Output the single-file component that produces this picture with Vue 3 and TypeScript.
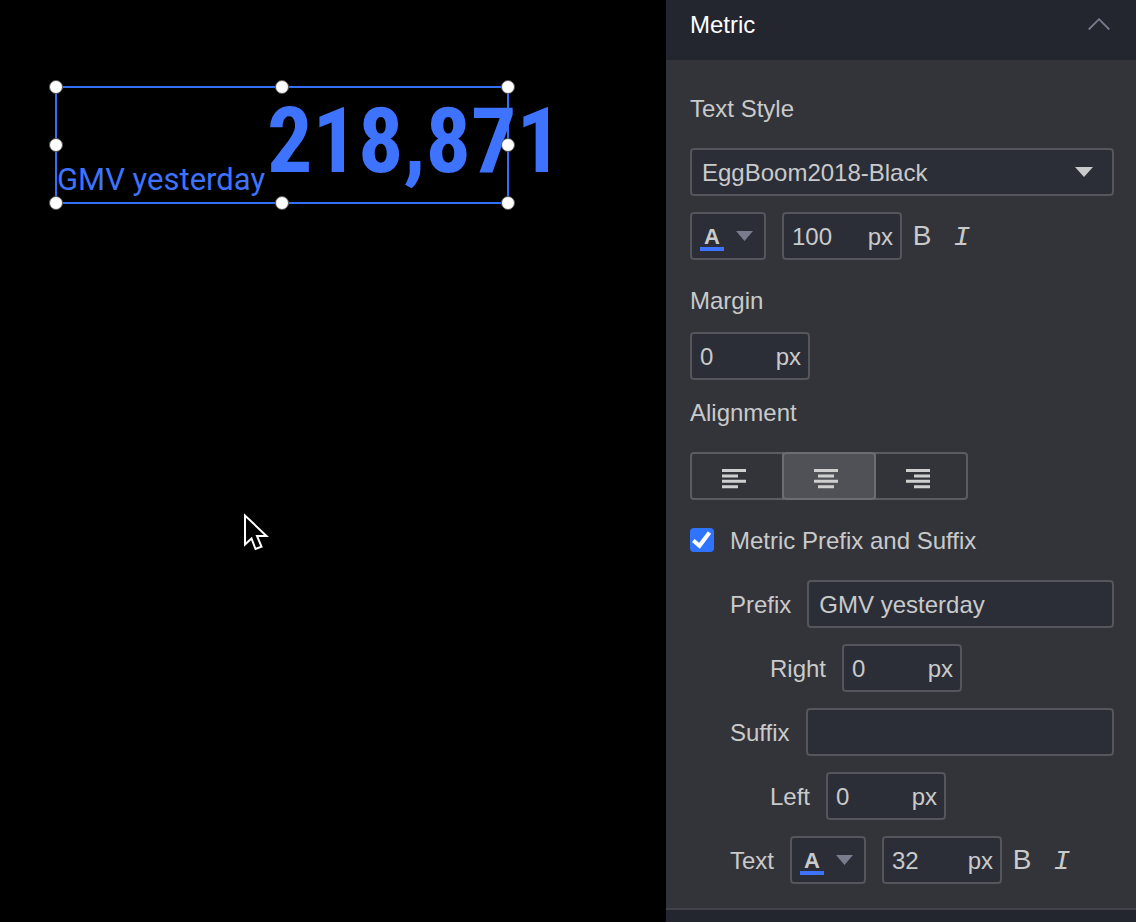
<script setup lang="ts">
import { ref } from 'vue'

type Align = 'left' | 'center' | 'right'

const value = ref('218,871')
const font = ref('EggBoom2018-Black')
const fontSize = ref('100')
const margin = ref('0')
const align = ref<Align>('center')
const affixes = ref(true)
const prefix = ref('GMV yesterday')
const prefixRight = ref('0')
const suffix = ref('')
const suffixLeft = ref('0')
const affixSize = ref('32')
const open = ref(true)

const handles = ['nw', 'n', 'ne', 'w', 'e', 'sw', 's', 'se']
const alignments: { id: Align; path: string }[] = [
  { id: 'left', path: 'M0 1.500H24M0 7H16M0 12.300H24M0 17.800H16' },
  { id: 'center', path: 'M0 1.500H24M4 7H20M0 12.300H24M4 17.800H20' },
  { id: 'right', path: 'M0 1.500H24M8 7H24M0 12.300H24M8 17.800H24' },
]
</script>

<template>
  <div class="editor">
    <main class="canvas">
      <div class="widget">
        <span class="widget-prefix">{{ prefix }}</span>
        <span class="widget-value">{{ value }}</span>
        <i v-for="h in handles" :key="h" class="handle" :class="h"></i>
      </div>
      <svg class="cursor" width="26" height="40" viewBox="0 0 26 40" aria-hidden="true">
        <path d="M2 3.500V32.500L8.500 26.500L12.500 37L18.500 34.700L14 24H23.500Z" fill="#000" stroke="#fff" stroke-width="2" />
      </svg>
    </main>

    <aside class="panel">
      <button class="panel-head" type="button" :aria-expanded="open" @click="open = !open">
        <span>Metric</span>
        <svg width="22" height="14" viewBox="0 0 22 14" aria-hidden="true">
          <path d="M0.700 11.500L11 1.200L21.300 11.500" fill="none" stroke="#767b8b" stroke-width="1.800" />
        </svg>
      </button>

      <div v-if="open" class="panel-body">
        <section class="group wide">
          <label class="label" for="font">Text Style</label>
          <div class="select-box">
            <select id="font" v-model="font" class="field">
              <option>EggBoom2018-Black</option>
            </select>
            <svg class="select-arrow" width="18" height="10" viewBox="0 0 18 10" aria-hidden="true">
              <path d="M0 0H18L9 10Z" fill="#c9cacb" />
            </svg>
          </div>
        </section>
        <div class="row style-row">
          <button class="field color" type="button" aria-label="Text color">
            <span class="color-letter">A</span>
            <svg width="17" height="10" viewBox="0 0 17 10" aria-hidden="true">
              <path d="M0 0H17L8.500 10Z" fill="#787c8d" />
            </svg>
          </button>
          <div class="toolset">
            <label class="field unit"><input v-model="fontSize" aria-label="Font size" /><span>px</span></label>
            <button class="toggle" type="button" aria-label="Bold">B</button>
            <button class="toggle italic" type="button" aria-label="Italic">I</button>
          </div>
        </div>

        <section class="group margin-group">
          <label class="label" for="margin">Margin</label>
          <label class="field unit"><input id="margin" v-model="margin" /><span>px</span></label>
        </section>

        <section class="group wide">
          <span id="alignment" class="label">Alignment</span>
          <div class="segments" role="group" aria-labelledby="alignment">
            <button
              v-for="a in alignments"
              :key="a.id"
              type="button"
              :aria-label="a.id"
              :aria-pressed="align === a.id"
              :class="{ active: align === a.id }"
              @click="align = a.id"
            >
              <svg width="24" height="20" viewBox="0 0 24 20" aria-hidden="true">
                <path :d="a.path" fill="none" stroke="#cfcfd0" stroke-width="3" />
              </svg>
            </button>
          </div>
        </section>

        <label class="check">
          <span class="check-box">
            <input v-model="affixes" type="checkbox" />
            <svg v-if="affixes" width="24" height="24" viewBox="0 0 24 24" aria-hidden="true">
              <path d="M3.300 12.500L9.500 17.800L19.500 4.500" fill="none" stroke="#fff" stroke-width="4" />
            </svg>
          </span>
          <span class="label">Metric Prefix and Suffix</span>
        </label>

        <div class="affixes">
          <div class="row">
            <label class="label" for="prefix">Prefix</label>
            <input id="prefix" v-model="prefix" class="field grow" />
          </div>
          <div class="row nested">
            <label class="label" for="right">Right</label>
            <label class="field unit"><input id="right" v-model="prefixRight" /><span>px</span></label>
          </div>
          <div class="row">
            <label class="label" for="suffix">Suffix</label>
            <input id="suffix" v-model="suffix" class="field grow" />
          </div>
          <div class="row nested">
            <label class="label" for="left">Left</label>
            <label class="field unit"><input id="left" v-model="suffixLeft" /><span>px</span></label>
          </div>
          <div class="row">
            <label class="label" for="affix-size">Text</label>
            <button class="field color" type="button" aria-label="Prefix and suffix color">
              <span class="color-letter">A</span>
              <svg width="17" height="10" viewBox="0 0 17 10" aria-hidden="true">
                <path d="M0 0H17L8.500 10Z" fill="#787c8d" />
              </svg>
            </button>
            <div class="toolset">
              <label class="field unit"><input id="affix-size" v-model="affixSize" /><span>px</span></label>
              <button class="toggle" type="button" aria-label="Bold">B</button>
              <button class="toggle italic" type="button" aria-label="Italic">I</button>
            </div>
          </div>
        </div>
      </div>
      <div class="panel-next"></div>
    </aside>
  </div>
</template>

<style>
body {
  background: #000;
}
</style>

<style scoped>
.editor,
.editor * {
  box-sizing: border-box;
}
.editor {
  display: grid;
  grid-template-columns: minmax(0, 666fr) minmax(0, 470fr);
  min-height: 100vh;
  background: #000;
  color: #c9cacb;
  font: 24px/32px 'Liberation Sans', Arial, sans-serif;
}
button,
input,
select {
  margin: 0;
  color: inherit;
  font: inherit;
}
svg {
  display: block;
  flex: none;
}

.canvas {
  position: relative;
  overflow: hidden;
}
.widget {
  position: absolute;
  left: 55px;
  top: 86px;
  width: 454px;
  height: 118px;
  display: flex;
  align-items: flex-start;
  border: 2px solid #3370f5;
  color: #3d73ff;
  white-space: nowrap;
}
.widget-prefix {
  margin-top: 76px;
  font: 31px/32px Roboto, sans-serif;
}
.widget-value {
  margin-left: 2px;
  font: bold 90px/108px 'Roboto Condensed', 'Open Sans Condensed', 'Noto Sans Condensed', 'Liberation Sans', sans-serif;
}
.handle {
  position: absolute;
  width: 14px;
  height: 14px;
  border: 1px solid #555;
  border-radius: 50%;
  background: #fff;
}
.nw, .w, .sw { left: -8px; }
.n, .s { left: calc(50% - 7px); }
.ne, .e, .se { right: -8px; }
.nw, .n, .ne { top: -8px; }
.w, .e { top: calc(50% - 7px); }
.sw, .s, .se { bottom: -8px; }
.cursor {
  position: absolute;
  left: 243px;
  top: 512px;
}

.panel {
  display: flex;
  flex-direction: column;
  background: #333439;
}
.panel-head {
  display: flex;
  justify-content: space-between;
  align-items: center;
  padding: 9px 26px 19px 24px;
  border: 0;
  background: #23262f;
  color: #fff;
}
.panel-body {
  padding: 32px 22px 24px 24px;
  border-bottom: 2px solid #424348;
}
.panel-next {
  flex: 1;
  min-height: 12px;
  background: #23262f;
}
.label {
  height: 32px;
  padding-top: 1px;
}
.group {
  display: flex;
  flex-direction: column;
  align-items: flex-start;
  gap: 16px;
}
.wide {
  gap: 24px;
}
.margin-group {
  margin: 24px 0 16px;
}
.row {
  display: flex;
  align-items: center;
  gap: 16px;
}
.style-row {
  margin-top: 16px;
}
.field {
  height: 48px;
  padding: 2px 10px 0;
  border: 2px solid #54565b;
  border-radius: 4px;
  background: #2b2e37;
  outline: 0;
}
.select-box {
  position: relative;
  width: 100%;
}
select.field {
  display: block;
  width: 100%;
  appearance: none;
}
.select-arrow {
  position: absolute;
  right: 21px;
  top: 19px;
  pointer-events: none;
}
.grow {
  flex: 1;
  min-width: 0;
}
.unit {
  display: flex;
  align-items: center;
  width: 120px;
  padding: 2px 7px 0 8px;
}
.unit input {
  flex: 1;
  min-width: 0;
  padding: 0;
  border: 0;
  background: none;
  outline: 0;
}
.color {
  display: flex;
  align-items: center;
  gap: 12px;
  width: 76px;
  padding: 0 8px;
}
.color-letter {
  width: 24px;
  margin-top: 6px;
  border-bottom: 4px solid #3d73ff;
  font-weight: bold;
  font-size: 22px;
  line-height: 20px;
  text-align: center;
}
.toolset {
  display: flex;
  align-items: center;
}
.toggle {
  width: 40px;
  height: 48px;
  padding: 0;
  border: 0;
  background: none;
  font-size: 28px;
}
.italic {
  padding-top: 4px;
  font-family: 'Liberation Mono', monospace;
  font-style: italic;
}
.segments {
  display: flex;
}
.segments button {
  display: flex;
  align-items: center;
  justify-content: center;
  width: 94px;
  height: 48px;
  padding: 6px 6px 0 0;
  border: 2px solid #5a5c61;
  background: none;
}
.segments button + button {
  margin-left: -2px;
}
.segments button:first-child {
  border-radius: 4px 0 0 4px;
}
.segments button:last-child {
  border-radius: 0 4px 4px 0;
}
.segments .active {
  z-index: 1;
  border-color: #6b6d71;
  border-radius: 4px;
  background: #505156;
}
.check {
  display: flex;
  align-items: center;
  gap: 16px;
  margin: 24px 0;
}
.check-box {
  display: grid;
}
.check-box > * {
  grid-area: 1 / 1;
}
.check-box input {
  width: 24px;
  height: 24px;
  border-radius: 4px;
  background: #44464c;
  appearance: none;
}
.check-box input:checked {
  background: #2f74ff;
}
.check-box svg {
  pointer-events: none;
}
.affixes {
  display: flex;
  flex-direction: column;
  gap: 16px;
  padding-left: 40px;
}
.nested {
  padding-left: 40px;
}
</style>
